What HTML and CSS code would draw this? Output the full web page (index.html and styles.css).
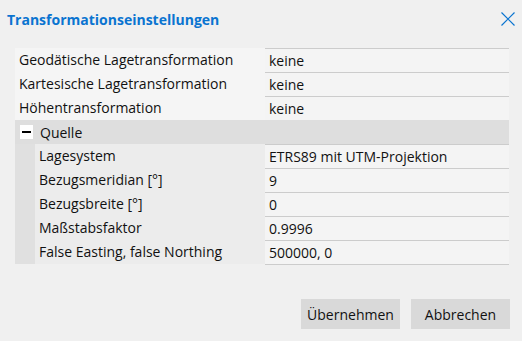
FILE: index.html
```html
<!DOCTYPE html>
<html>
<head>
    <title>Transformationseinstellungen</title>
    <link rel="stylesheet" href="styles.css">
</head>
<body>
    <div class="dialog">
        <div class="header">
            <h1 class="title">Transformationseinstellungen</h1>
            <svg class="close" width="14" height="14" viewBox="0 0 14 14">
                <path d="M0.5 0.5 L13.5 13.5 M13.5 0.5 L0.5 13.5" stroke="#0a74d0" stroke-width="1.2" fill="none"/>
            </svg>
        </div>

        <div class="props">
            <div class="row">
                <div class="label">Geodätische Lagetransformation</div>
                <div class="value">keine</div>
            </div>
            <div class="row">
                <div class="label">Kartesische Lagetransformation</div>
                <div class="value">keine</div>
            </div>
            <div class="row">
                <div class="label">Höhentransformation</div>
                <div class="value">keine</div>
            </div>
            <div class="group">
                <span class="toggle"><span class="minus"></span></span>
                <span>Quelle</span>
            </div>
            <div class="children">
                <div class="indent"></div>
                <div class="child-rows">
                    <div class="row child">
                        <div class="label">Lagesystem</div>
                        <div class="value">ETRS89 mit UTM-Projektion</div>
                    </div>
                    <div class="row child">
                        <div class="label">Bezugsmeridian [°]</div>
                        <div class="value">9</div>
                    </div>
                    <div class="row child">
                        <div class="label">Bezugsbreite [°]</div>
                        <div class="value">0</div>
                    </div>
                    <div class="row child">
                        <div class="label">Maßstabsfaktor</div>
                        <div class="value">0.9996</div>
                    </div>
                    <div class="row child last">
                        <div class="label">False Easting, false Northing</div>
                        <div class="value">500000, 0</div>
                    </div>
                </div>
            </div>
        </div>

        <div class="buttons">
            <button class="btn">Übernehmen</button>
            <button class="btn">Abbrechen</button>
        </div>
    </div>
</body>
</html>
```

FILE: styles.css
```css
body {
  margin: 0;
  background-color: #f0f0f0;
  font-family: "Open Sans", "Noto Sans", sans-serif;
  font-size: 14px;
  color: #111111;
}

.dialog {
  width: 522px;
  height: 341px;
}

.header {
  display: flex;
  justify-content: space-between;
  align-items: center;
  height: 38px;
  padding: 0 7px 0 7px;
}

.title {
  margin: 0;
  font-size: 14px;
  font-weight: bold;
  color: #0a74d0;
}

.props {
  margin: 10px 13px 0 15px;
  display: flex;
  flex-direction: column;
}

.row {
  display: flex;
  height: 24px;
}

.label {
  width: 246px;
  padding-left: 4px;
  line-height: 24px;
  background-color: #f5f5f5;
  white-space: nowrap;
}

.value {
  flex: 1;
  padding-left: 4px;
  line-height: 23px;
  border-top: 1px solid #cccccc;
  background-color: #f4f4f4;
}

.group {
  display: flex;
  align-items: center;
  height: 24px;
  background-color: #dedede;
}

.toggle {
  display: inline-flex;
  align-items: center;
  justify-content: center;
  width: 13px;
  height: 14px;
  margin: 0 7px 0 5px;
  background-color: #ffffff;
}

.minus {
  width: 9px;
  height: 2px;
  background-color: #000000;
}

.children {
  display: flex;
}

.indent {
  width: 20px;
  background-color: #e0e0e0;
}

.child-rows {
  flex: 1;
  display: flex;
  flex-direction: column;
}

.child .label {
  width: 226px;
  background-color: #ececec;
}

.last .value {
  height: 23px;
  border-bottom: 1px solid #cccccc;
}

.buttons {
  display: flex;
  justify-content: flex-end;
  gap: 11px;
  margin: 35px 12px 0 0;
}

.btn {
  width: 99px;
  height: 30px;
  border: none;
  background-color: #d9d9d9;
  font-family: "Open Sans", "Noto Sans", sans-serif;
  font-size: 14px;
  color: #111111;
}
```
